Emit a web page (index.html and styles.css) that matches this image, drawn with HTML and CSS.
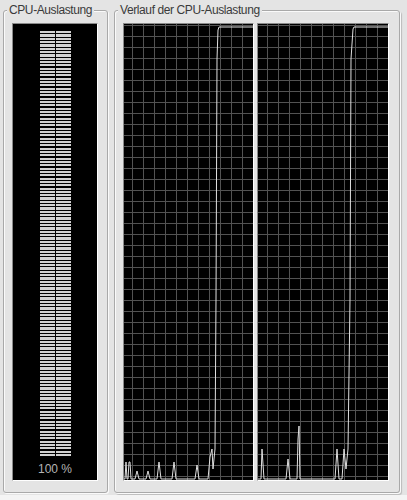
FILE: index.html
```html
<!DOCTYPE html>
<html lang="de">
<head>
    <meta charset="UTF-8">
    <title>CPU-Auslastung</title>
    <link rel="stylesheet" href="styles.css">
</head>
<body>
    <div class="panel">
        <fieldset class="group group-usage">
            <legend>CPU-Auslastung</legend>
            <div class="meter-box">
                <div class="meter">
                    <div class="meter-col"></div>
                    <div class="meter-col"></div>
                </div>
                <div class="meter-label">100 %</div>
            </div>
        </fieldset>
        <fieldset class="group group-history">
            <legend>Verlauf der CPU-Auslastung</legend>
            <div class="graphs">
                <div class="graph graph-a">
                    <svg width="129" height="456" viewBox="0 0 129 456">
                        <polyline points="0,455 1,455 2,438 3,455 4,455 5,438 6,438 7,455 11,455 13,447 15,455 22,455 24,447 26,455 33,455 35,438 37,455 48,455 50,438 52,455 71,455 73,441 75,455 84,455 86,433 88,425 89,445 91,425 92,275 93,35 94,6 95,3 129,3"/>
                    </svg>
                </div>
                <div class="graph graph-b">
                    <svg width="130" height="456" viewBox="0 0 130 456">
                        <polyline points="0,455 3,455 4,425 6,455 28,455 30,435 32,455 39,455 40,415 41,402 42,455 77,455 79,425 81,455 84,455 86,425 88,445 90,425 92,275 93,35 95,5 96,3 130,3"/>
                    </svg>
                </div>
            </div>
        </fieldset>
    </div>
</body>
</html>
```

FILE: styles.css
```css
body {
    margin: 0;
    background-color: #f4f4f4;
    font-family: "Liberation Sans", Arial, sans-serif;
}
.panel {
    display: flex;
    gap: 6px;
    height: 495px;
    padding: 0 7px 0 3px;
    background-color: #e4e4e4;
    box-sizing: border-box;
}
.group {
    margin: 3px 0 2px 0;
    min-width: 0;
    border: 1px solid #a9a9a9;
    border-radius: 3px;
    box-shadow: inset 1px 1px 0 #fafafa, 1px 1px 0 #fafafa;
}
.group legend {
    margin-left: -5px;
    padding: 0 2px;
    font-size: 12px;
    line-height: 14px;
    letter-spacing: -0.4px;
    white-space: nowrap;
    color: #3a3a3a;
    background-color: #e4e4e4;
}
.group-usage {
    width: 86px;
    padding: 6px 9px 9px 8px;
}
.group-history {
    flex: 1;
    padding: 6px 9px 9px 8px;
    box-shadow: inset 1px 1px 0 #fafafa, 1px 1px 0 #fafafa, 2px 2px 1px rgba(0,0,0,0.18);
}
.meter-box {
    height: 456px;
    background-color: #000;
    border: 1px solid #fff;
    border-top-color: #8a8a8a;
    border-left-color: #8a8a8a;
    display: flex;
    flex-direction: column;
    align-items: center;
}
.meter {
    display: flex;
    gap: 1px;
    margin-top: 7px;
    height: 425px;
}
.meter-col {
    width: 15px;
    background: repeating-linear-gradient(to bottom, #d2d2d2 0, #d2d2d2 2.2px, #000 2.2px, #000 3.33px);
}
.meter-label {
    margin-top: 6px;
    font-size: 12px;
    color: #b4b4b4;
}
.graphs {
    display: flex;
    gap: 3px;
}
.graph {
    height: 456px;
    background-color: #000;
    border: 1px solid #fff;
    border-top-color: #8a8a8a;
    border-left-color: #8a8a8a;
    background-image:
        linear-gradient(to right, #525252 1px, transparent 1px),
        linear-gradient(to bottom, #525252 1px, transparent 1px);
    background-size: 11px 11px;
}
.graph-a {
    width: 129px;
    background-position: 8px 12px;
}
.graph-b {
    width: 130px;
    background-position: 9px 12px;
}
.graph svg {
    display: block;
}
.graph polyline {
    fill: none;
    stroke: #e0e0e0;
    stroke-width: 1;
}
```
